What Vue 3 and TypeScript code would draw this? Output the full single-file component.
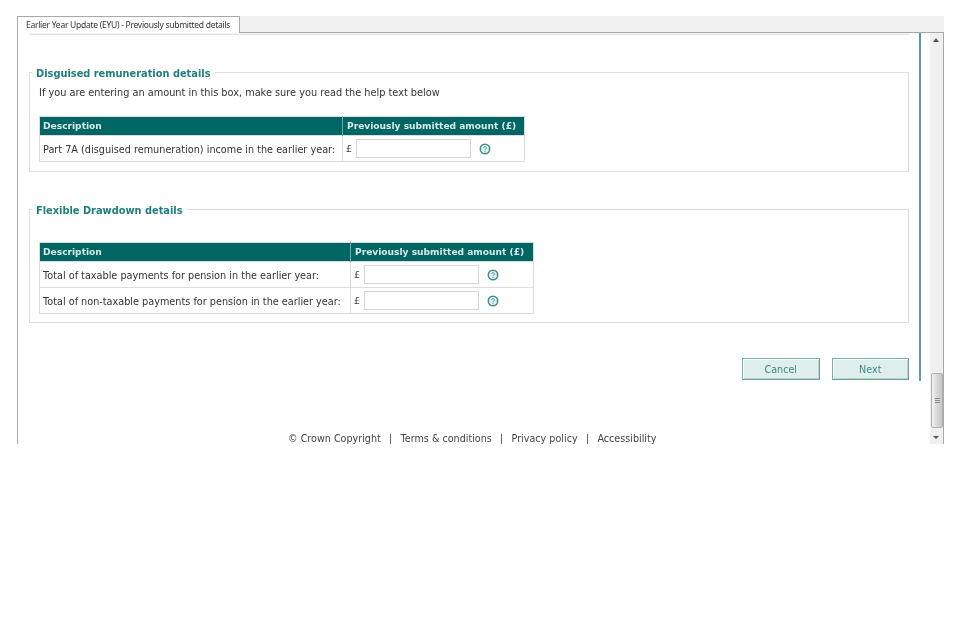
<script setup lang="ts">
interface Row { label: string }
const rows1: Row[] = [{ label: 'Part 7A (disguised remuneration) income in the earlier year:' }]
const rows2: Row[] = [
  { label: 'Total of taxable payments for pension in the earlier year:' },
  { label: 'Total of non-taxable payments for pension in the earlier year:' },
]
</script>

<template>
  <div class="window">
    <div class="tabstrip">
      <div class="tab">Earlier Year Update (EYU) - Previously submitted details</div>
    </div>
    <div class="body">
      <div class="scrollarea">
        <div class="panel">
          <div class="topline"></div>
          <fieldset class="group first">
            <legend>Disguised remuneration details</legend>
            <p class="hint">If you are entering an amount in this box, make sure you read the help text below</p>
            <table class="grid t1">
              <thead>
                <tr><th class="c1">Description</th><th>Previously submitted amount (£)</th></tr>
              </thead>
              <tbody>
                <tr v-for="r in rows1" :key="r.label">
                  <td>{{ r.label }}</td>
                  <td>
                    <div class="amount">
                      <span class="pound">£</span>
                      <input class="field" type="text" />
                      <svg class="help" viewBox="0 0 12 12" width="12" height="12" aria-hidden="true">
                        <circle cx="6" cy="6" r="4.7" fill="#e4f1f0" stroke="#3f8f8c" stroke-width="1.6" />
                        <path d="M4.6 4.9a1.4 1.3 0 1 1 2.2 1.1c-.5.3-.8.6-.8 1.1" fill="none" stroke="#3f8f8c" stroke-width="1" />
                        <circle cx="6" cy="8.5" r=".6" fill="#3f8f8c" />
                      </svg>
                    </div>
                  </td>
                </tr>
              </tbody>
            </table>
          </fieldset>
          <fieldset class="group second">
            <legend>Flexible Drawdown details</legend>
            <table class="grid t2">
              <thead>
                <tr><th class="c1">Description</th><th>Previously submitted amount (£)</th></tr>
              </thead>
              <tbody>
                <tr v-for="r in rows2" :key="r.label">
                  <td>{{ r.label }}</td>
                  <td>
                    <div class="amount">
                      <span class="pound">£</span>
                      <input class="field" type="text" />
                      <svg class="help" viewBox="0 0 12 12" width="12" height="12" aria-hidden="true">
                        <circle cx="6" cy="6" r="4.7" fill="#e4f1f0" stroke="#3f8f8c" stroke-width="1.6" />
                        <path d="M4.6 4.9a1.4 1.3 0 1 1 2.2 1.1c-.5.3-.8.6-.8 1.1" fill="none" stroke="#3f8f8c" stroke-width="1" />
                        <circle cx="6" cy="8.5" r=".6" fill="#3f8f8c" />
                      </svg>
                    </div>
                  </td>
                </tr>
              </tbody>
            </table>
          </fieldset>
          <div class="actions">
            <button class="btn" type="button">Cancel</button>
            <button class="btn" type="button">Next</button>
          </div>
        </div>
        <footer class="foot">
          <span>© Crown Copyright</span><i></i><span>Terms &amp; conditions</span><i></i><span>Privacy policy</span><i></i><span>Accessibility</span>
        </footer>
      </div>
      <div class="scrollbar">
        <span class="arrow up"></span>
        <div class="thumb"><b></b></div>
        <span class="arrow down"></span>
      </div>
    </div>
  </div>
</template>

<style scoped>
.window {
  box-sizing: border-box;
  margin: 16px 0 0 17px;
  width: 927px;
  height: 428px;
  display: flex;
  flex-direction: column;
  overflow: hidden;
  font-family: "DejaVu Sans", Verdana, sans-serif;
  font-size: 9.7px;
  color: #333;
  filter: blur(0.45px);
}
.tabstrip {
  box-sizing: border-box;
  height: 17px;
  flex: none;
  background: #f0f0f0;
  border-bottom: 1px solid #a8a8a8;
}
.tab {
  box-sizing: border-box;
  width: 223px;
  height: 17px;
  padding: 2px 0 0 8px;
  background: #fff;
  border: 1px solid #a8a8b0;
  border-bottom: 0;
  font-family: "Noto Sans", sans-serif;
  font-size: 8.5px;
  line-height: 11px;
  letter-spacing: -0.27px;
  color: #333;
  white-space: nowrap;
}
.body {
  flex: 1;
  min-height: 0;
  display: flex;
  border-left: 1px solid #a8a8a8;
  border-right: 1px solid #a8a8a8;
  overflow: hidden;
}
.scrollarea {
  width: 912px;
  flex: none;
  background: #fff;
}
.panel {
  box-sizing: border-box;
  width: 903px;
  height: 348px;
  padding-left: 11px;
  border-right: 2px solid #5c9c9a;
}
.topline {
  width: 880px;
  height: 1px;
  background: #f1f1f1;
  border-bottom: 1px solid #e4e4e4;
}
.group {
  box-sizing: border-box;
  width: 880px;
  margin: 0;
  padding: 0 0 0 9px;
  border: 1px solid #dedede;
  min-inline-size: 0;
}
.group legend {
  padding: 4px 4px 0;
  margin-left: -7px;
  font-weight: bold;
  font-size: 9.83px;
  line-height: 10px;
  color: #1d7f7c;
}
.first {
  margin-top: 30px;
  height: 107px;
}
.second {
  margin-top: 30px;
  height: 121px;
}
.hint {
  margin: 7px 0 0;
  line-height: 14px;
  font-size: 9.76px;
  color: #333;
}
.grid {
  border-collapse: collapse;
  table-layout: fixed;
  border: 1px solid #dcdcdc;
}
.t1 {
  width: 486px;
  margin-top: 16px;
}
.t1 .c1 { width: 303px; }
.t2 {
  width: 495px;
  margin-top: 26px;
}
.t2 .c1 { width: 311px; }
.grid th {
  box-sizing: border-box;
  height: 19px;
  padding: 0 3px;
  background: #006663;
  border-right: 1px solid #6fa8a6;
  color: #d8eae9;
  font-size: 9.1px;
  font-weight: bold;
  text-align: left;
  white-space: nowrap;
}
.grid th:last-child {
  border-right: 0;
  padding-left: 4px;
}
.grid td {
  box-sizing: border-box;
  padding: 0 3px;
  border: 1px solid #dcdcdc;
  white-space: nowrap;
  color: #333;
  font-size: 9.7px;
}
.grid td:first-child {
  padding-top: 2px;
}
.t1 td { height: 26px; }
.t2 td { height: 26px; }
.amount {
  display: flex;
  align-items: center;
}
.pound {
  width: 10px;
  font-size: 9.5px;
  color: #444;
}
.field {
  box-sizing: border-box;
  width: 115px;
  height: 19px;
  padding: 0;
  margin: 0;
  border: 1px solid #d6d6d6;
  background: #fff;
  outline: 0;
}
.help {
  margin-left: 8px;
  flex: none;
}
.actions {
  width: 880px;
  margin-top: 35px;
  display: flex;
  justify-content: flex-end;
  gap: 12px;
}
.btn {
  box-sizing: border-box;
  width: 77.5px;
  height: 22px;
  padding: 0;
  background: #e0eeec;
  border: 1px solid #6fb0ad;
  border-right-color: #6a9e9c;
  border-bottom-color: #6a9e9c;
  box-shadow: inset 1px 1px 0 #fff, inset -1px -1px 0 #c4cfce;
  font-family: "DejaVu Sans", Verdana, sans-serif;
  font-size: 9.6px;
  color: #3b8a88;
}
.foot {
  margin-top: 51px;
  display: flex;
  align-items: center;
  padding-left: 270px;
  font-size: 9.6px;
  line-height: 13px;
  color: #444;
  white-space: nowrap;
}
.foot i {
  width: 1px;
  height: 10px;
  margin: 0 9.4px;
  background: #666;
}
.scrollbar {
  position: relative;
  width: 13px;
  flex: none;
  background: #f0f0f0;
}
.arrow {
  position: absolute;
  left: 3px;
  width: 0;
  height: 0;
  border-left: 3px solid transparent;
  border-right: 3px solid transparent;
}
.arrow.up {
  top: 5px;
  border-bottom: 4px solid #555;
}
.arrow.down {
  bottom: 5px;
  border-top: 3px solid #555;
}
.thumb {
  position: absolute;
  left: 1px;
  right: 0;
  top: 340px;
  height: 55px;
  box-sizing: border-box;
  border: 1px solid #b0b0b0;
  border-radius: 2px;
  background: linear-gradient(90deg, #f4f4f4, #d8d8d8 50%, #c6c6c6);
  display: flex;
  align-items: center;
  justify-content: center;
}
.thumb b {
  display: block;
  width: 5px;
  height: 6px;
  background: repeating-linear-gradient(180deg, #888 0 1px, #ddd 1px 2px);
}
</style>
